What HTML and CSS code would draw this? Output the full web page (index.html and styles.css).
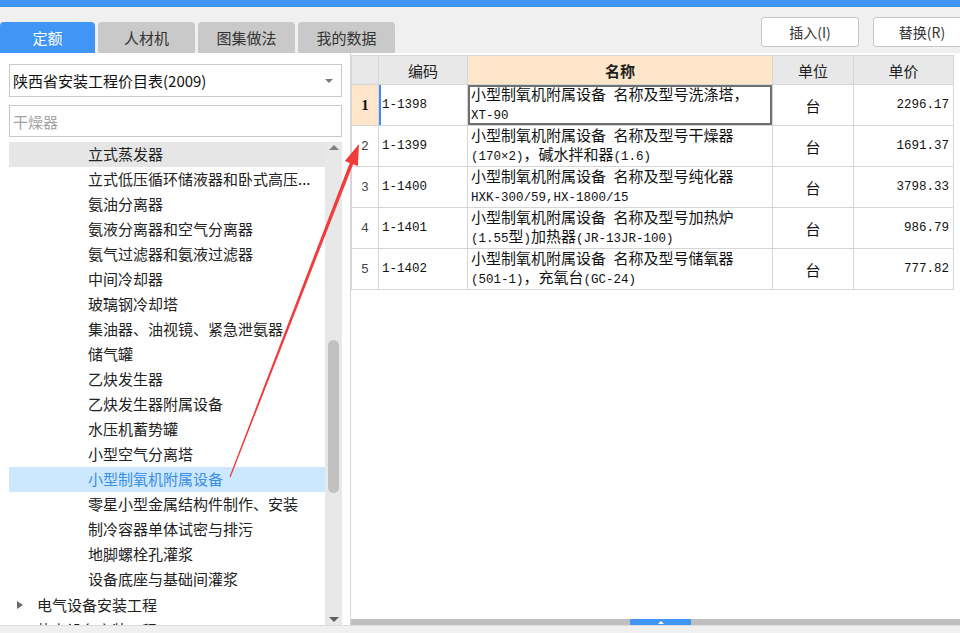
FILE: index.html
```html
<!DOCTYPE html>
<html lang="zh-CN">
<head>
<meta charset="utf-8">
<title>定额</title>
<link rel="stylesheet" href="styles.css">
</head>
<body>
<div class="topbar"></div>
<div class="toolbar">
  <div class="tabs">
    <div class="tab active">定额</div>
    <div class="tab">人材机</div>
    <div class="tab">图集做法</div>
    <div class="tab">我的数据</div>
  </div>
  <div class="actions">
    <button class="btn">插入(I)</button>
    <button class="btn">替换(R)</button>
  </div>
</div>
<div class="main">
  <aside class="left">
    <div class="select"><span>陕西省安装工程价目表(2009)</span><span class="caret"></span></div>
    <div class="search">干燥器</div>
    <div class="tree">
      <ul class="tree-list">
        <li class="cur">立式蒸发器</li>
        <li>立式低压循环储液器和卧式高压...</li>
        <li>氨油分离器</li>
        <li>氨液分离器和空气分离器</li>
        <li>氨气过滤器和氨液过滤器</li>
        <li>中间冷却器</li>
        <li>玻璃钢冷却塔</li>
        <li>集油器、油视镜、紧急泄氨器</li>
        <li>储气罐</li>
        <li>乙炔发生器</li>
        <li>乙炔发生器附属设备</li>
        <li>水压机蓄势罐</li>
        <li>小型空气分离塔</li>
        <li class="sel">小型制氧机附属设备</li>
        <li>零星小型金属结构件制作、安装</li>
        <li>制冷容器单体试密与排污</li>
        <li>地脚螺栓孔灌浆</li>
        <li>设备底座与基础间灌浆</li>
        <li class="top"><span class="exp"></span>电气设备安装工程</li>
        <li class="top"><span class="exp"></span>热力设备安装工程</li>
      </ul>
      <div class="vscroll">
        <span class="vs-up"></span>
        <span class="thumb"></span>
        <span class="vs-down"></span>
      </div>
    </div>
  </aside>
  <section class="right">
    <table class="grid">
      <colgroup>
        <col class="c-rh"><col class="c-code"><col class="c-name"><col class="c-unit"><col class="c-price">
      </colgroup>
      <thead>
        <tr><th></th><th>编码</th><th class="name">名称</th><th>单位</th><th>单价</th></tr>
      </thead>
      <tbody>
        <tr class="active">
          <td class="rh">1</td><td class="code">1-1398</td>
          <td class="name">小型制氧机附属设备<span class="a"> </span>名称及型号洗涤塔，<br><span class="a">XT-90</span></td>
          <td class="unit">台</td><td class="price">2296.17</td>
        </tr>
        <tr>
          <td class="rh">2</td><td class="code">1-1399</td>
          <td class="name">小型制氧机附属设备<span class="a"> </span>名称及型号干燥器<br><span class="a">(170×2)</span>，碱水拌和器<span class="a">(1.6)</span></td>
          <td class="unit">台</td><td class="price">1691.37</td>
        </tr>
        <tr>
          <td class="rh">3</td><td class="code">1-1400</td>
          <td class="name">小型制氧机附属设备<span class="a"> </span>名称及型号纯化器<br><span class="a">HXK-300/59,HX-1800/15</span></td>
          <td class="unit">台</td><td class="price">3798.33</td>
        </tr>
        <tr>
          <td class="rh">4</td><td class="code">1-1401</td>
          <td class="name">小型制氧机附属设备<span class="a"> </span>名称及型号加热炉<br><span class="a">(1.55</span>型<span class="a">)</span>加热器<span class="a">(JR-13JR-100)</span></td>
          <td class="unit">台</td><td class="price">986.79</td>
        </tr>
        <tr>
          <td class="rh">5</td><td class="code">1-1402</td>
          <td class="name">小型制氧机附属设备<span class="a"> </span>名称及型号储氧器<br><span class="a">(501-1)</span>，充氧台<span class="a">(GC-24)</span></td>
          <td class="unit">台</td><td class="price">777.82</td>
        </tr>
      </tbody>
    </table>
    <div class="fill"></div>
    <div class="hscroll"><span class="hthumb"></span></div>
  </section>
</div>
<div class="status"></div>
<svg class="arrow" width="960" height="633" viewBox="0 0 960 633" aria-hidden="true">
  <polygon fill="#f23b3b" points="229.4,476.8 230.6,477.2 353.1,164.3 357.9,166.1 359,144 344.9,161.1 349.7,162.9"/>
</svg>
</body>
</html>
```

FILE: styles.css
```css
* { box-sizing: border-box; }
html, body { margin: 0; padding: 0; }
body {
  width: 960px;
  height: 633px;
  overflow: hidden;
  position: relative;
  background: #f0f0f0;
  font-family: "Noto Sans CJK SC", "Noto Sans", sans-serif;
  font-size: 15px;
  color: #222;
}

.topbar { height: 7px; background: #3f96f5; }

.toolbar { height: 46px; display: flex; overflow: hidden; }
.tabs { display: flex; gap: 3px; align-self: flex-end; }
.tab {
  width: 97px;
  height: 31px;
  border-radius: 4px 4px 0 0;
  background: #c9c9c9;
  color: #333;
  display: flex;
  align-items: center;
  justify-content: center;
  font-size: 15px;
}
.tab.active { width: 95px; background: #3f96f5; color: #fff; }

.actions { margin-left: auto; margin-right: -11px; display: flex; gap: 14px; padding-top: 10px; }
.btn {
  width: 98px;
  height: 30px;
  padding: 0;
  border: 1px solid #c6c6c6;
  border-radius: 3px;
  background: #fff;
  font-family: inherit;
  font-size: 14px;
  color: #333;
  display: flex;
  align-items: center;
  justify-content: center;
}

.main { height: 572px; display: flex; }

.left {
  width: 351px;
  flex: none;
  background: #fff;
  border-right: 1px solid #d8d8d8;
  padding: 11px 8px 0 9px;
  display: flex;
  flex-direction: column;
}
.select {
  height: 33px;
  border: 1px solid #c8c8c8;
  display: flex;
  align-items: center;
  justify-content: space-between;
  padding: 0 8px 0 3px;
  color: #111;
  flex: none;
}
.caret {
  width: 0; height: 0;
  border-left: 4px solid transparent;
  border-right: 4px solid transparent;
  border-top: 4px solid #7a7a7a;
}
.search {
  height: 32px;
  margin-top: 8px;
  border: 1px solid #c8c8c8;
  padding-left: 3px;
  display: flex;
  align-items: center;
  color: #a3a3a3;
  flex: none;
}

.tree { flex: 1; min-height: 0; margin-top: 5px; display: flex; }
.tree-list { flex: 1; min-width: 0; margin: 0; padding: 0; list-style: none; overflow: hidden; }
.tree-list li {
  height: 25px;
  line-height: 24px;
  padding-left: 79px;
  white-space: nowrap;
  color: #222;
}
.tree-list li.cur { background: #e6e6e6; }
.tree-list li.sel { background: #cce8ff; color: #3a8de6; }
.tree-list li.top { padding-left: 8px; display: flex; align-items: center; }
.exp {
  width: 0; height: 0;
  margin-right: 14px;
  border-top: 4.5px solid transparent;
  border-bottom: 4.5px solid transparent;
  border-left: 6px solid #6a6a6a;
}

.vscroll {
  width: 17px;
  flex: none;
  background: #e8e8e8;
  display: flex;
  flex-direction: column;
  align-items: center;
}
.vs-up, .vs-down { width: 17px; height: 10px; display: flex; align-items: center; justify-content: center; flex: none; }
.vs-down { margin-top: auto; height: 12px; }
.vs-up::before {
  content: "";
  border-left: 5px solid transparent;
  border-right: 5px solid transparent;
  border-bottom: 5px solid #808080;
}
.vs-down::before {
  content: "";
  border-left: 5px solid transparent;
  border-right: 5px solid transparent;
  border-top: 5px solid #606060;
}
.thumb { width: 11px; height: 153px; margin-top: 188px; border-radius: 6px; background: #c1c1c1; flex: none; }

.right { flex: 1; min-width: 0; background: #fff; padding-top: 2px; display: flex; flex-direction: column; }

.grid { border-collapse: collapse; table-layout: fixed; width: 602px; }
.c-rh { width: 27px; }
.c-code { width: 89px; }
.c-name { width: 305px; }
.c-unit { width: 81px; }
.c-price { width: 100px; }
.grid th, .grid td { border: 1px solid #d6d6d6; padding: 0; }
.grid th {
  height: 29px;
  background: #e8e8e8;
  font-weight: normal;
  font-size: 15px;
  color: #222;
}
.grid th.name { background: #fde6c9; font-weight: bold; }
.grid td { height: 41px; vertical-align: middle; color: #111; }
.grid td.rh { text-align: center; font-family: "Liberation Mono", monospace; font-size: 13px; color: #444; }
.grid tr.active td.rh { background: #fde6c9; font-family: "Liberation Serif", serif; font-weight: bold; font-size: 15px; color: #111; }
.grid td.code { padding-left: 3px; font-family: "Liberation Mono", monospace; font-size: 12.5px; }
.grid td.name { padding-left: 3px; font-size: 15px; line-height: 16px; }
.grid td.unit { text-align: center; font-size: 15px; }
.grid td.price { text-align: right; padding-right: 4px; font-family: "Liberation Mono", monospace; font-size: 12.5px; }
.grid tr.active td.code { box-shadow: inset 2px 0 0 #3d8ff0; }
.grid tr.active td.name { box-shadow: inset 0 0 0 2px #707070; }
.a { font-family: "Liberation Mono", monospace; font-size: 12.5px; }

.fill { flex: 1; }
.hscroll { height: 6px; background: #bfbfbf; display: flex; padding-left: 279px; flex: none; }
.hthumb { width: 61px; height: 6px; background: #3f96f5; display: flex; align-items: center; justify-content: center; }
.hthumb::before {
  content: "";
  border-left: 3px solid transparent;
  border-right: 3px solid transparent;
  border-bottom: 3px solid #fff;
}

.status { height: 8px; background: #f0f0f0; border-top: 1px solid #dcdcdc; }

.arrow { position: absolute; left: 0; top: 0; pointer-events: none; }
```
